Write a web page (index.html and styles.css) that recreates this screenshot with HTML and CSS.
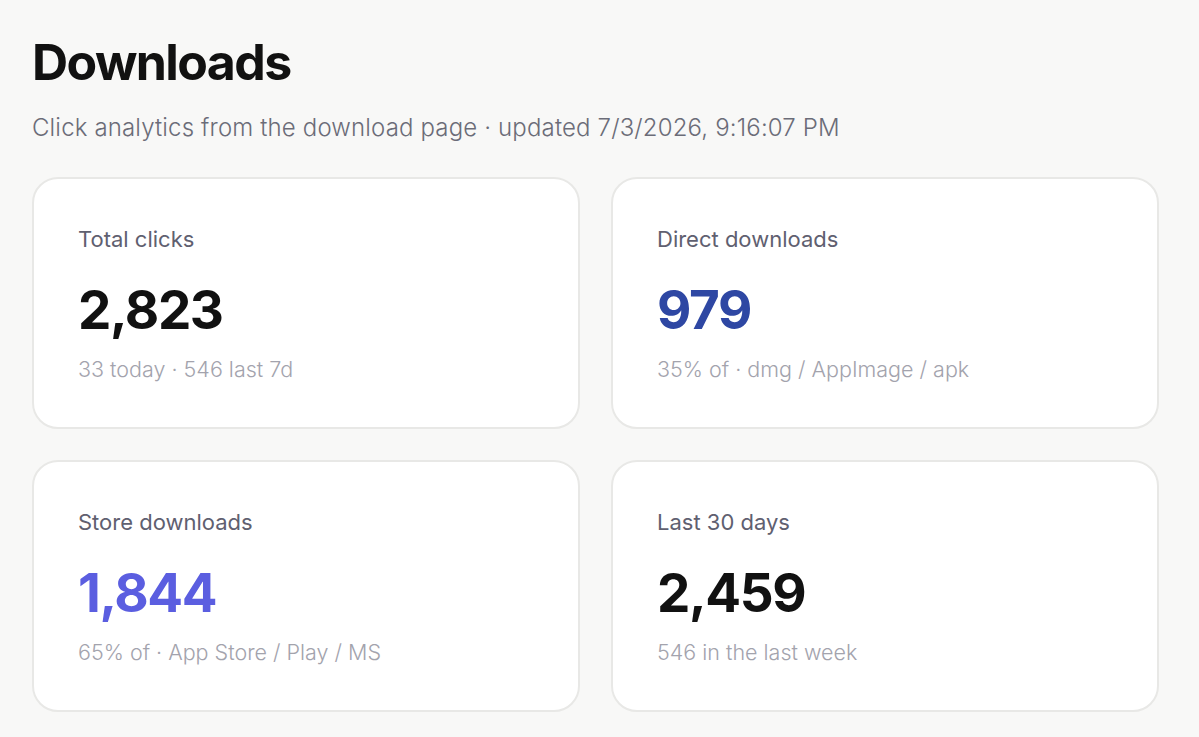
FILE: index.html
```html
<!DOCTYPE html>
<html lang="en">
<head>
    <meta charset="UTF-8">
    <meta name="viewport" content="width=device-width, initial-scale=1.0">
    <title>Downloads</title>
    <link rel="stylesheet" href="styles.css">
</head>
<body>
    <div class="page">
        <header>
            <h1>Downloads</h1>
            <p class="subtitle">Click analytics from the download page · updated 7/3/2026, 9:16:07 PM</p>
        </header>

        <div class="stats-grid">
            <div class="stat-card">
                <div class="stat-label">Total clicks</div>
                <div class="stat-value">2,823</div>
                <div class="stat-note">33 today · 546 last 7d</div>
            </div>
            <div class="stat-card">
                <div class="stat-label">Direct downloads</div>
                <div class="stat-value direct">979</div>
                <div class="stat-note">35% of · dmg / AppImage / apk</div>
            </div>
            <div class="stat-card">
                <div class="stat-label">Store downloads</div>
                <div class="stat-value store">1,844</div>
                <div class="stat-note">65% of · App Store / Play / MS</div>
            </div>
            <div class="stat-card">
                <div class="stat-label">Last 30 days</div>
                <div class="stat-value">2,459</div>
                <div class="stat-note">546 in the last week</div>
            </div>
        </div>
    </div>
</body>
</html>
```

FILE: styles.css
```css
* {
    box-sizing: border-box;
    margin: 0;
    padding: 0;
    font-family: Inter, 'Noto Sans', sans-serif;
}
body {
    background: #f8f8f7;
    color: #111;
}
.page {
    width: 1127px;
    margin-left: 32px;
    padding-top: 34px;
}
h1 {
    font-size: 50px;
    font-weight: 700;
    letter-spacing: -1.6px;
    line-height: 56px;
    color: #111;
}
.subtitle {
    margin-top: 22px;
    font-size: 24px;
    font-weight: 300;
    letter-spacing: 0.15px;
    line-height: 32px;
    color: #6b6c78;
}
.stats-grid {
    display: grid;
    grid-template-columns: 1fr 1fr;
    gap: 31px 31px;
    margin-top: 33px;
}
.stat-card {
    height: 252px;
    background: #fff;
    border: 2px solid #e8e8e6;
    border-radius: 26px;
    padding: 45px 44px;
}
.stat-label {
    font-size: 22px;
    line-height: 30px;
    font-weight: 400;
    color: #5f6070;
}
.stat-value {
    margin-top: 26px;
    font-size: 53px;
    line-height: 60px;
    font-weight: 700;
    letter-spacing: -1.4px;
    color: #111;
}
.stat-value.direct {
    color: #2e47a3;
}
.stat-value.store {
    color: #5b5ee0;
}
.stat-note {
    margin-top: 14px;
    font-size: 21.5px;
    line-height: 30px;
    font-weight: 300;
    color: #a3a3ad;
}
```
